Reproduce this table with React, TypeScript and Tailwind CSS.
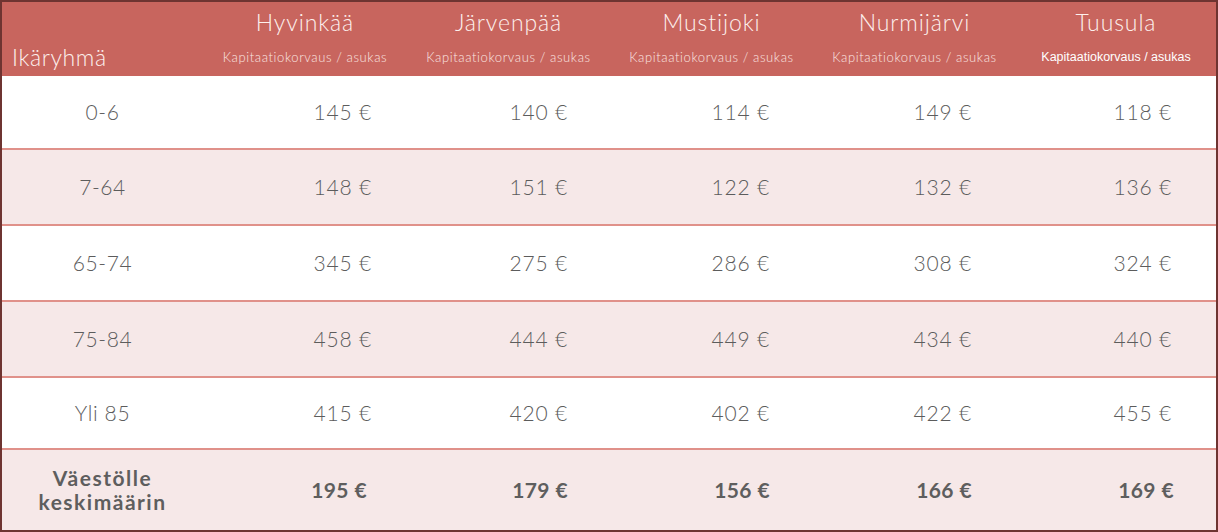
import React from "react";

const cities = ["Hyvinkää", "Järvenpää", "Mustijoki", "Nurmijärvi", "Tuusula"];

const rows: { label: string; values: string[]; alt: boolean }[] = [
  { label: "0-6", values: ["145 €", "140 €", "114 €", "149 €", "118 €"], alt: false },
  { label: "7-64", values: ["148 €", "151 €", "122 €", "132 €", "136 €"], alt: true },
  { label: "65-74", values: ["345 €", "275 €", "286 €", "308 €", "324 €"], alt: false },
  { label: "75-84", values: ["458 €", "444 €", "449 €", "434 €", "440 €"], alt: true },
  { label: "Yli 85", values: ["415 €", "420 €", "402 €", "422 €", "455 €"], alt: false },
];

const heights = ["h-[74px]", "h-[76px]", "h-[76px]", "h-[76px]", "h-[72px]"];
const pads = ["pr-[35px]", "pr-[42px]", "pr-[43px]", "pr-[44px]", "pr-[44px]"];
const boldPads = ["pr-[40px]", "pr-[42px]", "pr-[43px]", "pr-[44px]", "pr-[42px]"];

export default function App() {
  return (
    <div className="w-[1218px] h-[532px] bg-white border-2 border-[#6e3431] flex flex-col overflow-hidden font-['Lato',sans-serif] font-light">
      <div className="h-[74px] bg-[#c8655e] grid grid-cols-[201px_204px_203px_203px_203px_200px] shrink-0">
        <div className="flex items-end pb-[2px] pl-[10px] text-[23px] tracking-[0.6px] text-[#fdf0ed]">Ikäryhmä</div>
        {cities.map((c, i) => (
          <div key={c} className="flex flex-col items-center pt-[5px]">
            <div className="text-[23px] leading-[30px] text-[#fdf0ed] tracking-[0.9px]">{c}</div>
            <div
              className={
                i === 4
                  ? "mt-[12px] text-[12.5px] leading-[16px] text-white font-normal font-['Liberation_Sans',sans-serif]"
                  : "mt-[12px] text-[13px] leading-[16px] tracking-[0.6px] text-[#fbe6e2]"
              }
            >
              Kapitaatiokorvaus / asukas
            </div>
          </div>
        ))}
      </div>
      {rows.map((r, ri) => (
        <div
          key={r.label}
          className={
            "grid grid-cols-[201px_204px_203px_203px_203px_200px] border-b-2 border-[#e0918a] shrink-0 " +
            heights[ri] +
            (r.alt ? " bg-[#f6e8e8]" : " bg-white")
          }
        >
          <div className="flex items-center justify-center text-[21px] tracking-[0.6px] text-[#5c5c5c]">{r.label}</div>
          {r.values.map((v, i) => (
            <div
              key={i}
              className={"flex items-center justify-end text-[21px] tracking-[0.8px] text-[#5c5c5c] " + pads[i]}
            >
              {v}
            </div>
          ))}
        </div>
      ))}
      <div className="flex-1 bg-[#f6e8e8] grid grid-cols-[201px_204px_203px_203px_203px_200px]">
        <div className="flex flex-col items-center justify-center text-[21px] leading-[24px] tracking-[1.5px] font-bold text-[#5e5e5e]">
          <span>Väestölle</span>
          <span>keskimäärin</span>
        </div>
        {["195 €", "179 €", "156 €", "166 €", "169 €"].map((v, i) => (
          <div
            key={i}
            className={"flex items-center justify-end text-[21px] tracking-[0.4px] font-bold text-[#5e5e5e] " + boldPads[i]}
          >
            {v}
          </div>
        ))}
      </div>
    </div>
  );
}
